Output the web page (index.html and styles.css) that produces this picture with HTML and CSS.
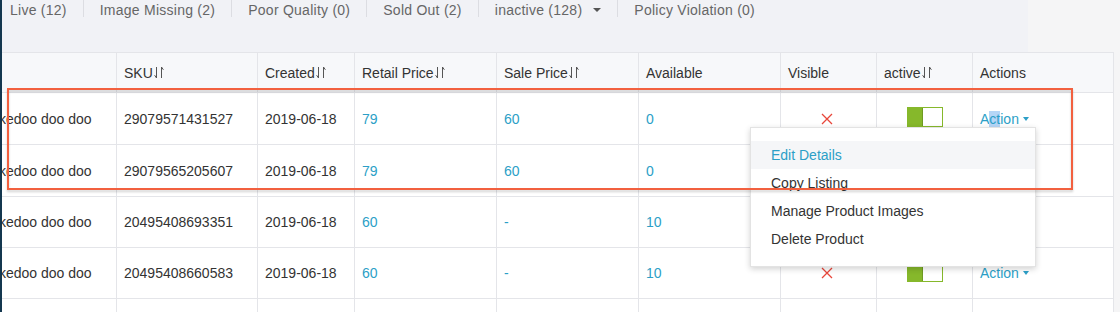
FILE: index.html
```html
<!DOCTYPE html>
<html>
<head>
<meta charset="utf-8">
<link rel="stylesheet" href="styles.css">
</head>
<body>
<div class="page">
  <nav class="tabs">
    <span class="tab first">Live (12)</span>
    <span class="tab">Image Missing (2)</span>
    <span class="tab">Poor Quality (0)</span>
    <span class="tab">Sold Out (2)</span>
    <span class="tab">inactive (128)<span class="tcaret"></span></span>
    <span class="tab last">Policy Violation (0)</span>
  </nav>

  <div class="table">
    <div class="row head">
      <div class="cell"></div>
      <div class="cell">SKU<svg class="sort" width="10" height="13" viewBox="0 0 10 13"><path d="M2.5 1v11L0.6 9.2M7.5 12V1l1.9 2.8" fill="none" stroke="#555" stroke-width="1"/></svg></div>
      <div class="cell">Created<svg class="sort" width="10" height="13" viewBox="0 0 10 13"><path d="M2.5 1v11L0.6 9.2M7.5 12V1l1.9 2.8" fill="none" stroke="#555" stroke-width="1"/></svg></div>
      <div class="cell">Retail Price<svg class="sort" width="10" height="13" viewBox="0 0 10 13"><path d="M2.5 1v11L0.6 9.2M7.5 12V1l1.9 2.8" fill="none" stroke="#555" stroke-width="1"/></svg></div>
      <div class="cell">Sale Price<svg class="sort" width="10" height="13" viewBox="0 0 10 13"><path d="M2.5 1v11L0.6 9.2M7.5 12V1l1.9 2.8" fill="none" stroke="#555" stroke-width="1"/></svg></div>
      <div class="cell">Available</div>
      <div class="cell">Visible</div>
      <div class="cell">active<svg class="sort" width="10" height="13" viewBox="0 0 10 13"><path d="M2.5 1v11L0.6 9.2M7.5 12V1l1.9 2.8" fill="none" stroke="#555" stroke-width="1"/></svg></div>
      <div class="cell">Actions</div>
    </div>

    <div class="row tall">
      <div class="cell name">kedoo doo doo</div>
      <div class="cell">29079571431527</div>
      <div class="cell">2019-06-18</div>
      <div class="cell link">79</div>
      <div class="cell link">60</div>
      <div class="cell link">0</div>
      <div class="cell center"><svg class="x" width="12" height="12" viewBox="0 0 12 12"><path d="M1 1l10 10M11 1L1 11" stroke="#e8463a" stroke-width="1.3"/></svg></div>
      <div class="cell center"><span class="toggle"></span></div>
      <div class="cell actions">
        <span class="action">A<span class="sel">ct</span>ion<span class="acaret"></span></span>
        <div class="menu">
          <div class="item hl">Edit Details</div>
          <div class="item">Copy Listing</div>
          <div class="item">Manage Product Images</div>
          <div class="item">Delete Product</div>
        </div>
      </div>
    </div>

    <div class="row tall">
      <div class="cell name">kedoo doo doo</div>
      <div class="cell">29079565205607</div>
      <div class="cell">2019-06-18</div>
      <div class="cell link">79</div>
      <div class="cell link">60</div>
      <div class="cell link">0</div>
      <div class="cell center"><svg class="x" width="12" height="12" viewBox="0 0 12 12"><path d="M1 1l10 10M11 1L1 11" stroke="#e8463a" stroke-width="1.3"/></svg></div>
      <div class="cell center"><span class="toggle"></span></div>
      <div class="cell"><span class="action">Action<span class="acaret"></span></span></div>
    </div>

    <div class="row">
      <div class="cell name">kedoo doo doo</div>
      <div class="cell">20495408693351</div>
      <div class="cell">2019-06-18</div>
      <div class="cell link">60</div>
      <div class="cell link">-</div>
      <div class="cell link">10</div>
      <div class="cell center"><svg class="x" width="12" height="12" viewBox="0 0 12 12"><path d="M1 1l10 10M11 1L1 11" stroke="#e8463a" stroke-width="1.3"/></svg></div>
      <div class="cell center"><span class="toggle"></span></div>
      <div class="cell"><span class="action">Action<span class="acaret"></span></span></div>
    </div>

    <div class="row">
      <div class="cell name">kedoo doo doo</div>
      <div class="cell">20495408660583</div>
      <div class="cell">2019-06-18</div>
      <div class="cell link">60</div>
      <div class="cell link">-</div>
      <div class="cell link">10</div>
      <div class="cell center"><svg class="x" width="12" height="12" viewBox="0 0 12 12"><path d="M1 1l10 10M11 1L1 11" stroke="#e8463a" stroke-width="1.3"/></svg></div>
      <div class="cell center"><span class="toggle"></span></div>
      <div class="cell"><span class="action">Action<span class="acaret"></span></span></div>
    </div>

    <div class="row">
      <div class="cell name">kedoo doo doo</div>
      <div class="cell">20495408627815</div>
      <div class="cell">2019-06-18</div>
      <div class="cell link">60</div>
      <div class="cell link">-</div>
      <div class="cell link">10</div>
      <div class="cell center"><svg class="x" width="12" height="12" viewBox="0 0 12 12"><path d="M1 1l10 10M11 1L1 11" stroke="#e8463a" stroke-width="1.3"/></svg></div>
      <div class="cell center"><span class="toggle"></span></div>
      <div class="cell"><span class="action">Action<span class="acaret"></span></span></div>
    </div>
  </div>

  <div class="annotation"></div>
</div>
</body>
</html>
```

FILE: styles.css
```css
* { box-sizing: border-box; }

html, body {
  margin: 0;
  padding: 0;
  height: 312px;
  overflow: hidden;
  background: #f5f5f6;
  font-family: "Liberation Sans", Arial, Helvetica, sans-serif;
  font-size: 14px;
  color: #333;
}

.page {
  position: relative;
  border-left: 2px solid #14374f;
  height: 312px;
}

/* ---------- tabs ---------- */
.tabs {
  display: flex;
  align-items: flex-start;
  width: 1026px;
  height: 52px;
  background: #f1f2f6;
}

.tab {
  display: flex;
  align-items: center;
  height: 17px;
  line-height: 20px;
  padding: 3px 16px 0;
  border-right: 1px solid #dcdde2;
  color: #666;
  letter-spacing: 0.25px;
  white-space: nowrap;
  overflow: visible;
}

.tab.first { padding-left: 8px; }
.tab.last { border-right: none; }

.tcaret {
  display: inline-block;
  margin-left: 11px;
  width: 0;
  height: 0;
  border-left: 4px solid transparent;
  border-right: 4px solid transparent;
  border-top: 4px solid #555;
}

/* ---------- table ---------- */
.table {
  width: 1112px;
  border-top: 1px solid #e4e5e9;
  border-right: 1px solid #e4e5e9;
  background: #fff;
}

.row {
  display: grid;
  grid-template-columns: 114px 141px 97px 142px 142px 142px 96px 96px 141px;
  height: 51px;
  border-bottom: 1px solid #e4e5e9;
}

.row.tall { height: 52px; }

.row.head {
  height: 40px;
  background: #f7f8fa;
}

.cell {
  display: flex;
  align-items: center;
  padding-left: 7px;
  border-left: 1px solid #e4e5e9;
  white-space: nowrap;
  overflow: hidden;
}

.cell:first-child { border-left: none; }

.cell.name {
  padding-left: 0;
  text-indent: -3px;
}

.sort {
  margin-left: 1px;
  flex: none;
}

.link { color: #2c9fc7; }

.center {
  justify-content: center;
  padding-left: 0;
}

.x { margin-right: 3px; }

.toggle {
  display: block;
  width: 36px;
  height: 20px;
  margin-top: -3px;
  border: 1px solid #86b82b;
  background: linear-gradient(to right, #86b82b 14px, #6f9a22 14px, #6f9a22 15px, #fff 15px);
}

.action {
  color: #2c9fc7;
  display: inline-flex;
  align-items: center;
}

.sel { background: #b5d6f7; }

.acaret {
  display: inline-block;
  margin-left: 4px;
  width: 0;
  height: 0;
  border-left: 3.5px solid transparent;
  border-right: 3.5px solid transparent;
  border-top: 4px solid #2c9fc7;
}

.actions {
  position: relative;
  overflow: visible;
}

/* ---------- dropdown ---------- */
.menu {
  position: absolute;
  left: -223px;
  top: 34px;
  width: 286px;
  padding: 13px 0;
  background: #fff;
  border: 1px solid #e3e3e3;
  box-shadow: 0 2px 6px rgba(0, 0, 0, 0.18);
  z-index: 5;
}

.item {
  height: 28px;
  line-height: 28px;
  padding-left: 20px;
  color: #333;
}

.item.hl {
  background: #f5f6f8;
  color: #2c9fc7;
}

/* ---------- annotation overlay ---------- */
.annotation {
  position: absolute;
  left: 5px;
  top: 88px;
  width: 1066px;
  height: 102px;
  border: 2px solid #f2603f;
  filter: drop-shadow(0 2px 1px rgba(0, 0, 0, 0.18));
  z-index: 10;
  pointer-events: none;
}
```
